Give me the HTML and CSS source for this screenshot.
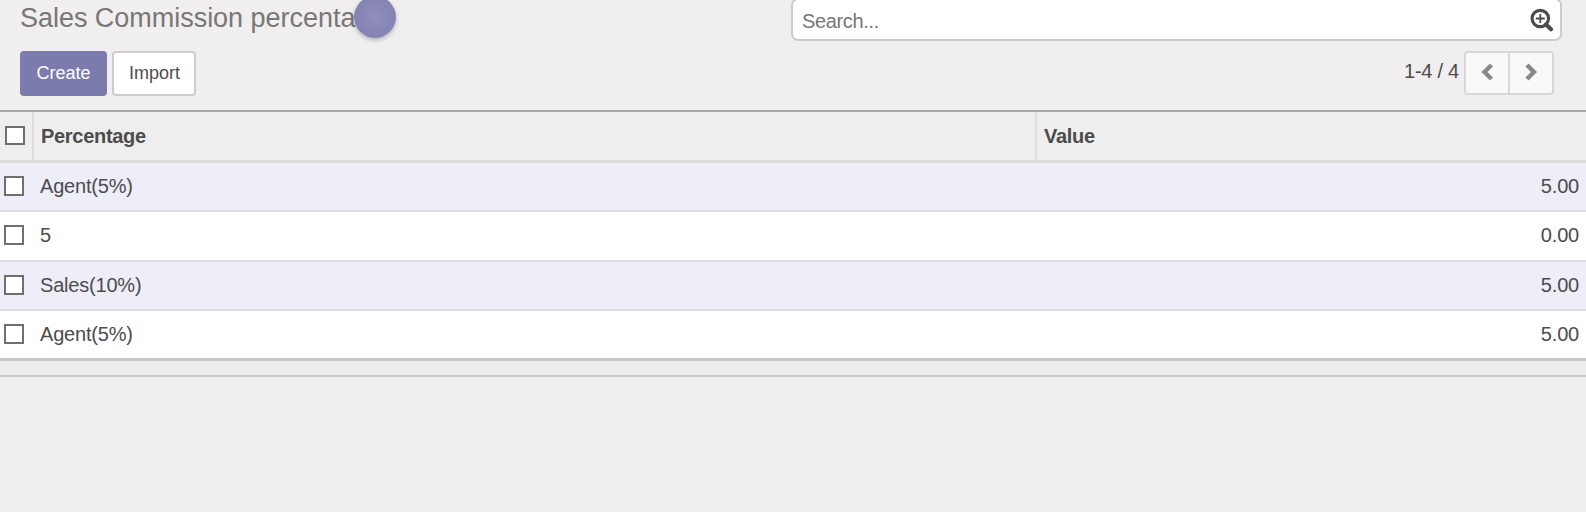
FILE: index.html
```html
<!DOCTYPE html>
<html lang="en">
<head>
<meta charset="utf-8">
<title>Sales Commission percentage</title>
<link rel="stylesheet" href="styles.css">
</head>
<body>
<header class="control-panel">
  <div class="panel-left">
    <h1 class="title">Sales Commission percenta</h1>
    <span class="loader"></span>
    <div class="buttons">
      <button class="btn btn-primary">Create</button>
      <button class="btn btn-default">Import</button>
    </div>
  </div>
  <div class="panel-right">
    <div class="search">
      <span class="search-text">Search...</span>
      <svg class="search-icon" width="24" height="24" viewBox="0 0 24 24" fill="none" stroke="#4c4c4c">
        <circle cx="10.3" cy="10.5" r="8.2" stroke-width="3.2"/>
        <path d="M5.8 10.5h9M10.3 6v9" stroke-width="1.8"/>
        <path d="M16 16.5l5 4.8" stroke-width="4" stroke-linecap="round"/>
      </svg>
    </div>
    <div class="pager">
      <span class="pager-text">1-4 / 4</span>
      <div class="pager-buttons">
        <button class="pager-btn"><svg width="12" height="18" viewBox="0 0 12 18"><path d="M10.5 2L3.5 9l7 7"/></svg></button>
        <button class="pager-btn"><svg width="12" height="18" viewBox="0 0 12 18"><path d="M2 2l7 7-7 7"/></svg></button>
      </div>
    </div>
  </div>
</header>
<main class="list">
  <div class="row head"><span class="cell check"><i class="box"></i></span><span class="cell name">Percentage</span><span class="cell">Value</span></div>
  <div class="row odd"><span class="check"><i class="box"></i></span><span class="name">Agent(5%)</span><span class="value">5.00</span></div>
  <div class="row tall"><span class="check"><i class="box"></i></span><span class="name">5</span><span class="value">0.00</span></div>
  <div class="row odd"><span class="check"><i class="box"></i></span><span class="name">Sales(10%)</span><span class="value">5.00</span></div>
  <div class="row last"><span class="check"><i class="box"></i></span><span class="name">Agent(5%)</span><span class="value">5.00</span></div>
  <div class="foot"></div>
</main>
</body>
</html>
```
FILE: styles.css
```css
* { box-sizing: border-box; }
body {
  margin: 0;
  height: 512px;
  overflow: hidden;
  background: #f0eeee;
  color: #4c4c4c;
  font: 20px/24px "Liberation Sans", Arial, sans-serif;
}
button { font-family: inherit; padding: 0; }
.control-panel {
  display: flex;
  justify-content: space-between;
  height: 112px;
  padding-left: 20px;
  border-bottom: 2px solid #a8a8a8;
}
.panel-left { position: relative; }
.title {
  margin: 0;
  height: 51px;
  padding-top: 1px;
  color: #777;
  font-size: 27px;
  font-weight: 400;
  letter-spacing: -.03px;
  line-height: 34px;
  white-space: nowrap;
}
.loader {
  position: absolute;
  left: 334px;
  top: -4px;
  width: 42px;
  height: 42px;
  border-radius: 50%;
  background: radial-gradient(circle, #908eba 0%, #7f7db0 100%);
  box-shadow: 0 2px 4px rgba(0, 0, 0, .25);
}
.buttons { display: flex; gap: 5px; }
.btn {
  height: 45px;
  padding-bottom: 2px;
  border-radius: 4px;
  font-size: 18px;
  line-height: 20px;
}
.btn-primary { width: 87px; border: 0; background: #7c7bad; color: #fff; }
.btn-default { width: 84px; padding-left: 1px; border: 2px solid #ccc; background: #fff; color: #4c4c4c; }
.panel-right { width: 795px; }
.search {
  display: flex;
  justify-content: space-between;
  align-items: center;
  width: 771px;
  height: 43px;
  margin-top: -2px;
  padding: 0 6px 0 9px;
  border: 2px solid #ccc;
  border-radius: 7px;
  background: #fff;
}
.search-icon { margin-top: 1px; }
.search-text { padding-top: 2px; color: #777; letter-spacing: -.35px; }
.pager {
  display: flex;
  justify-content: flex-end;
  margin: 10px 32px 0 0;
}
.pager-text { margin: 8px 5px 0 0; letter-spacing: -.25px; }
.pager-buttons {
  display: flex;
  width: 90px;
  height: 44px;
  border: 2px solid #d8d8d8;
  border-radius: 4px;
  background: #f9f9f9;
}
.pager-btn {
  display: flex;
  flex: 1;
  align-items: center;
  justify-content: center;
  padding-bottom: 2px;
  border: 0;
  background: none;
}
.pager-btn + .pager-btn { border-left: 2px solid #d8d8d8; }
.pager-btn path { fill: none; stroke: #888; stroke-width: 4.4; }
.row {
  display: grid;
  grid-template-columns: 32px 1003px 1fr;
  align-items: center;
  height: 49px;
  padding-bottom: 1px;
  border-bottom: 2px solid #ddd;
  background: #fff;
  letter-spacing: -.2px;
}
.odd { background: #eeeef8; }
.tall { height: 50px; padding-bottom: 2px; }
.last { height: 50px; border-bottom: 3px solid #c8c8c8; }
.head {
  height: 51px;
  padding-bottom: 0;
  border-bottom: 3px solid #ddd;
  background: #eee;
  font-weight: 700;
  letter-spacing: -.3px;
}
.check { display: flex; padding-left: 4px; }
.head .check { padding-left: 5px; }
.box { width: 20px; height: 20px; border: 2px solid #6f6f6f; background: #fff; }
.head .box { height: 19px; margin-bottom: 1px; }
.name { padding-left: 8px; }
.value { padding-right: 7px; text-align: right; }
.cell {
  display: flex;
  align-items: center;
  height: 48px;
  padding-left: 7px;
}
.cell + .cell { border-left: 2px solid #ddd; }
.foot { height: 16px; background: #eee; border-bottom: 2px solid #c8c8c8; }
.cell.name { padding-left: 7px; }
```
